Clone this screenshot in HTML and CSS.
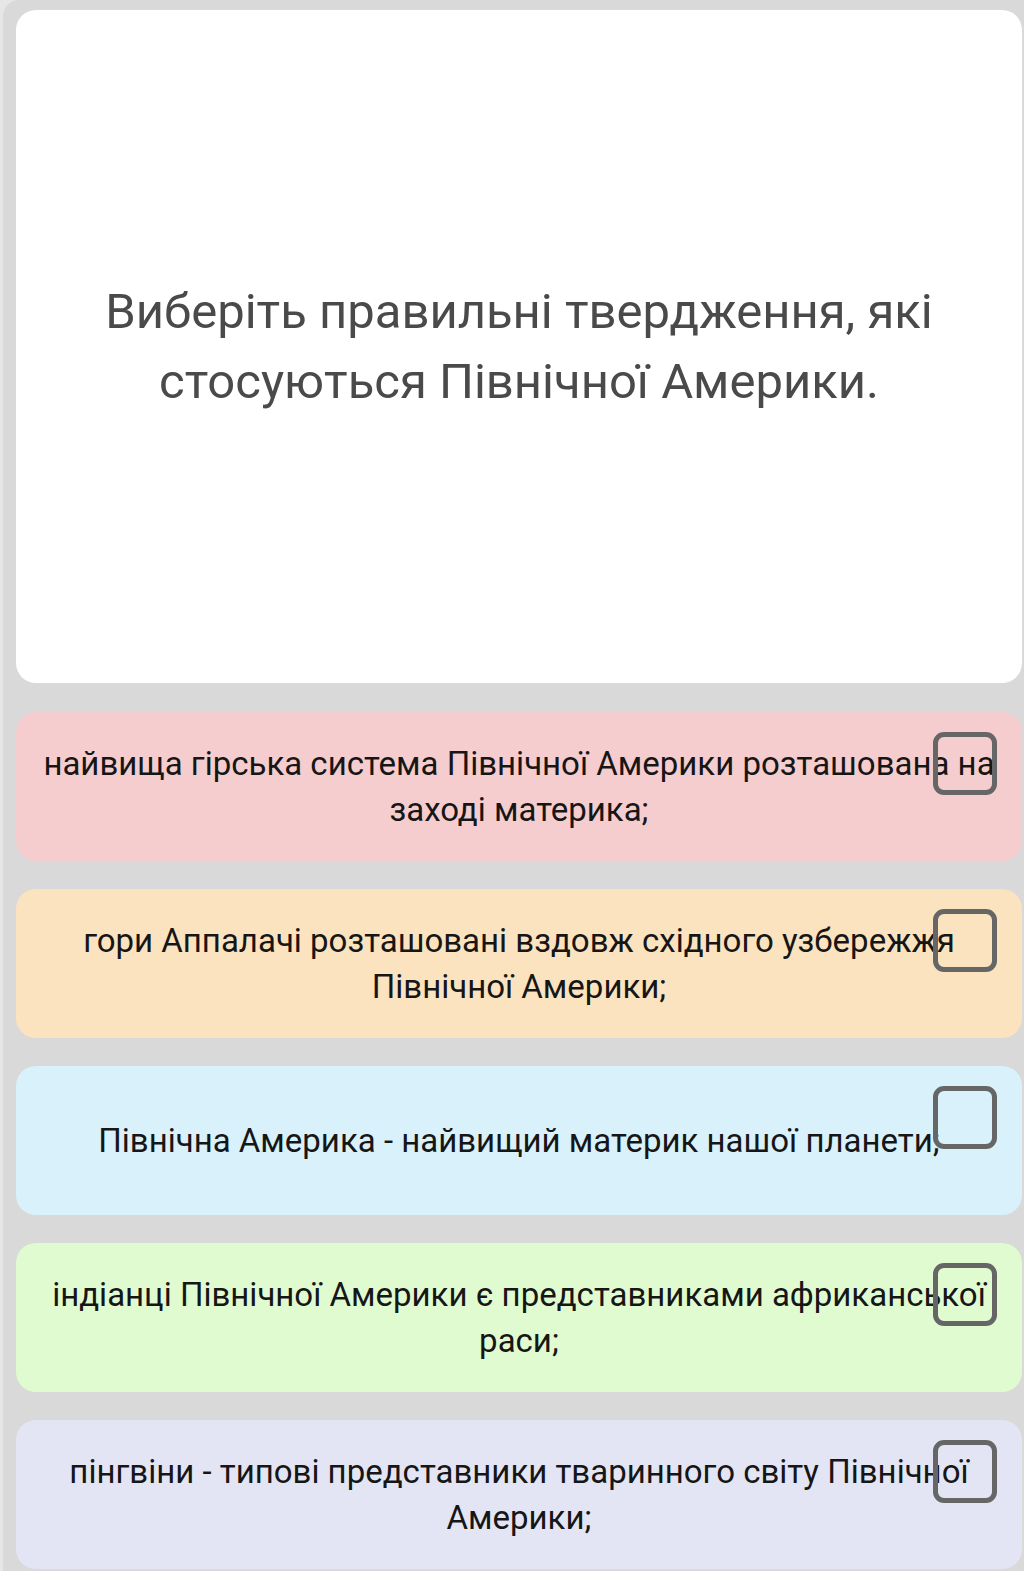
FILE: index.html
```html
<!DOCTYPE html>
<html lang="uk">
<head>
<meta charset="utf-8">
<link rel="stylesheet" href="styles.css">
</head>
<body>
<div class="screen">
  <div class="question">
    <p class="question-text">Виберіть правильні твердження, які стосуються Північної Америки.</p>
  </div>
  <div class="options">
    <div class="option pink">
      <p class="option-text">найвища гірська система Північної Америки розташована на заході материка;</p>
      <span class="check"></span>
    </div>
    <div class="option orange">
      <p class="option-text">гори Аппалачі розташовані вздовж східного узбережжя Північної Америки;</p>
      <span class="check"></span>
    </div>
    <div class="option blue">
      <p class="option-text">Північна Америка - найвищий материк нашої планети;</p>
      <span class="check"></span>
    </div>
    <div class="option green">
      <p class="option-text">індіанці Північної Америки є представниками африканської раси;</p>
      <span class="check"></span>
    </div>
    <div class="option lavender">
      <p class="option-text">пінгвіни - типові представники тваринного світу Північної Америки;</p>
      <span class="check"></span>
    </div>
  </div>
</div>
</body>
</html>
```

FILE: styles.css
```css
html, body {
  margin: 0;
  padding: 0;
}
body {
  background: #e6e6e6;
  font-family: Roboto, "Noto Sans", "Liberation Sans", sans-serif;
}
.screen {
  margin-left: 3px;
  min-height: 1571px;
  box-sizing: border-box;
  background: #d9d9d9;
  border-top-left-radius: 16px;
  padding: 10px 2px 0 13px;
}
.question {
  height: 673px;
  background: #ffffff;
  border-radius: 20px;
  display: flex;
  align-items: center;
  justify-content: center;
  padding: 0 60px;
  box-sizing: border-box;
}
.question-text {
  margin: 0;
  text-align: center;
  font-size: 49px;
  line-height: 70px;
  color: #4a4a4a;
}
.options {
  margin-top: 29px;
  display: flex;
  flex-direction: column;
  gap: 28px;
}
.option {
  position: relative;
  height: 149px;
  border-radius: 20px;
  display: flex;
  align-items: center;
  justify-content: center;
  padding: 0 20px;
  box-sizing: border-box;
}
.option-text {
  margin: 0;
  text-align: center;
  font-size: 33px;
  line-height: 46px;
  color: #161616;
}
.check {
  position: absolute;
  top: 20px;
  right: 25px;
  width: 64px;
  height: 63px;
  box-sizing: border-box;
  border: 5px solid #666666;
  border-radius: 11px;
}
.pink { background: #f6cdce; }
.orange { background: #fce3bf; }
.blue { background: #d9f1fb; }
.green { background: #e1fbd1; }
.lavender { background: #e4e5f4; }
```
